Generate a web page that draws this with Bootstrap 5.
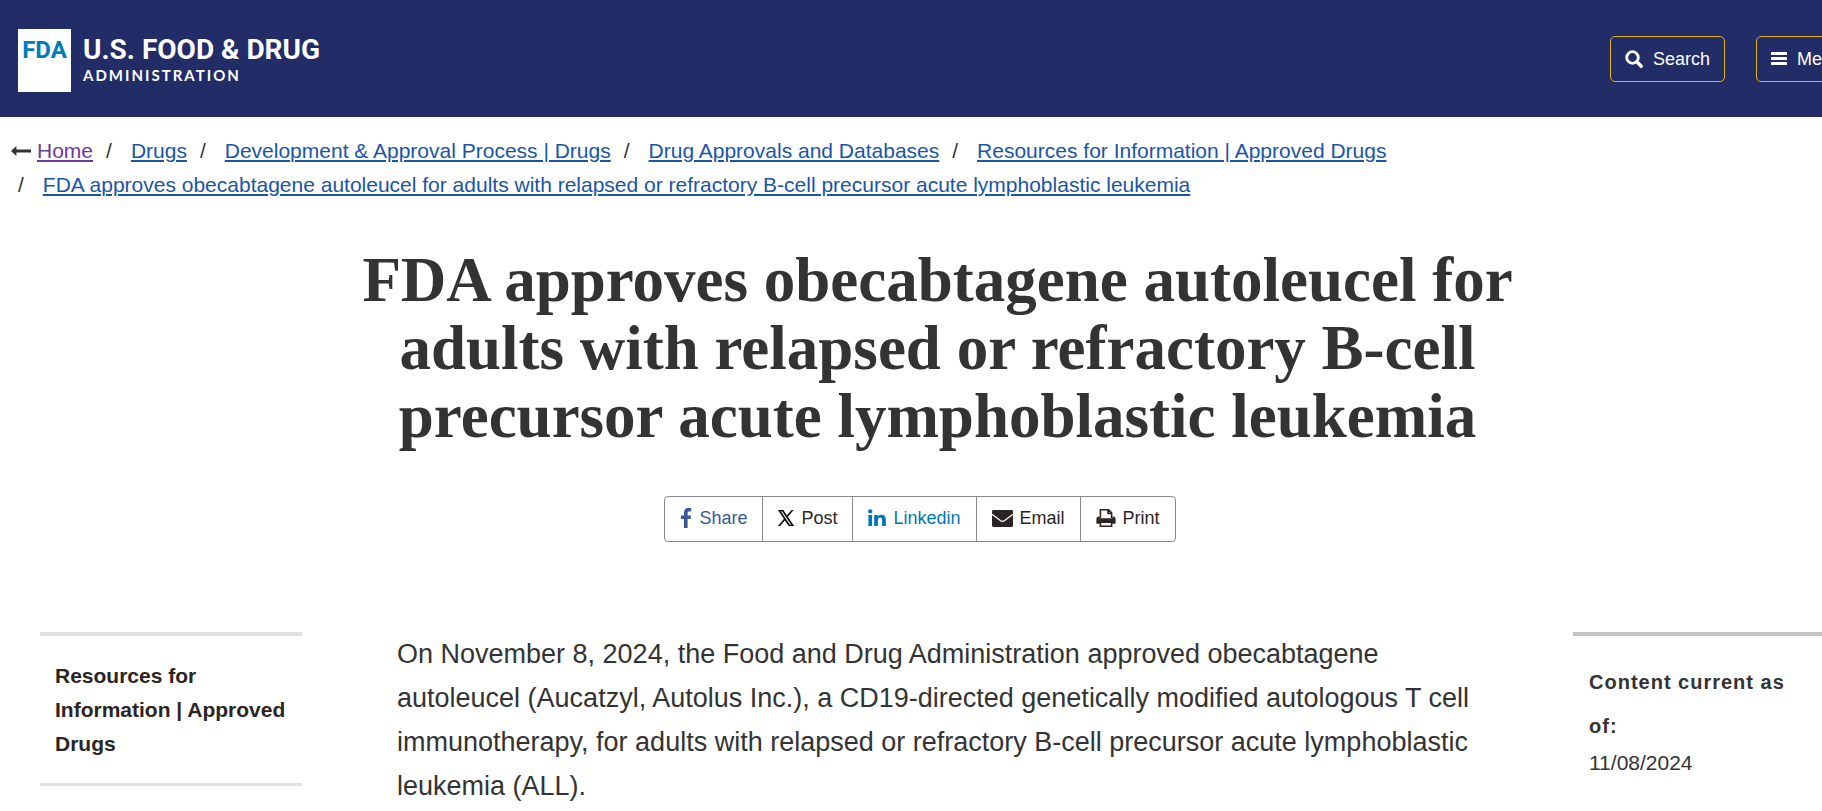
<!DOCTYPE html>
<html lang="en">
<head>
<meta charset="utf-8">
<meta name="viewport" content="width=device-width, initial-scale=1">
<title>FDA approves obecabtagene autoleucel</title>
<link rel="stylesheet" href="https://cdn.jsdelivr.net/npm/bootstrap@5.3.0/dist/css/bootstrap.min.css">
<style>
  body { font-family: "Liberation Sans", Arial, sans-serif; font-size: 21px; line-height: 34px; color: #333; background: #fff; overflow: hidden; }
  /* the page runs wider than the window, so its right edge is clipped */
  .page-canvas { width: calc(100% + 53px); }
  .site-header { background: #222c67; padding: 29px 18px 25px; }
  .logo-box { width: 53px; height: 63px; background: #fff; color: #007cba; font: 700 24px/24px Roboto, sans-serif; padding-top: 9px; }
  .logo-name { font: 700 28px/28px Roboto, sans-serif; }
  .logo-sub { font: 700 15px/22px Lato, sans-serif; letter-spacing: 2px; }
  .header-btn { --bs-btn-color: #fff; --bs-btn-border-color: #e5b611; --bs-btn-hover-color: #fff; --bs-btn-hover-border-color: #fff; --bs-btn-border-radius: 5px; height: 46px; padding: 0 14px; font-size: 18px; gap: 10px; }
  .header-actions { gap: 31px; padding-bottom: 3px; }
  .crumbs { padding: 17px 5px 0; }
  .crumbs a { color: #1a55a8; text-decoration-thickness: 2px; text-underline-offset: 2px; }
  .crumbs a.seen { color: #6f3a9b; }
  .crumbs li + li::before { content: "/"; padding: 0 19px 0 13px; }
  .crumbs svg { margin: 0 6px; }
  .page-title { font: 700 63px/68px "Liberation Serif", serif; color: #333; max-width: 1200px; margin-top: 44px; }
  .share-bar { padding-right: 35px; margin-top: 46px; }
  .share-bar .btn { --bs-btn-border-color: #8a8a8a; --bs-btn-hover-border-color: #8a8a8a; --bs-btn-color: #2b2523; --bs-btn-border-radius: 4px; height: 46px; padding: 0 15px 2px; font-size: 18px; gap: 7px; }
  .share-bar .fb { --bs-btn-color: #3b5998; }
  .share-bar .li { --bs-btn-color: #0077b5; }
  .content-row { padding: 0 40px; margin-top: 90px; gap: 95px; }
  .side-col { flex: 0 0 262px; }
  .side-nav { border-top: 4px solid #e1e1e3; border-bottom: 3px solid #e1e1e3; padding: 23px 15px 22px; }
  .side-nav a { color: #2b2523; }
  .article-text { font-size: 27px; line-height: 44px; }
  .date-card { border-top: 4px solid #c2c4c6; padding: 24px 16px; line-height: 30px; }
  .date-card h2 { font: 700 20px/44px "Liberation Sans", Arial, sans-serif; letter-spacing: 1px; }
</style>
</head>
<body>
<div class="page-canvas">
  <header class="site-header d-flex align-items-center justify-content-between text-white">
    <a href="#" class="d-flex align-items-center text-white text-decoration-none">
      <span class="logo-box text-center">FDA</span>
      <span class="d-flex flex-column ps-2 ms-1">
        <span class="logo-name">U.S. FOOD &amp; DRUG</span>
        <span class="logo-sub">ADMINISTRATION</span>
      </span>
    </a>
    <div class="header-actions d-flex">
      <button type="button" class="header-btn btn d-inline-flex align-items-center">
        <svg width="18" height="18" viewBox="0 0 18 18" fill="none" stroke="currentColor" aria-hidden="true"><circle cx="7.5" cy="7.5" r="5.8" stroke-width="2.8"/><path d="M11.8 11.8l4.4 4.4" stroke-width="3.4" stroke-linecap="round"/></svg>
        Search
      </button>
      <button type="button" class="header-btn btn d-inline-flex align-items-center">
        <svg width="16" height="14" viewBox="0 0 16 14" fill="currentColor" aria-hidden="true"><rect width="16" height="3" rx=".6"/><rect y="5" width="16" height="3" rx=".6"/><rect y="10" width="16" height="3" rx=".6"/></svg>
        Menu
      </button>
    </div>
  </header>

  <nav aria-label="Breadcrumb">
    <ol class="crumbs list-unstyled d-flex flex-wrap mb-0">
      <li class="d-flex align-items-center"><svg width="20" height="10" viewBox="0 0 20 10" fill="#333" aria-hidden="true"><path d="M0 5L5.400 0v3.500H20v3H5.400V10z"/></svg><a class="seen" href="#">Home</a></li>
      <li><a href="#">Drugs</a></li>
      <li><a href="#">Development &amp; Approval Process | Drugs</a></li>
      <li><a href="#">Drug Approvals and Databases</a></li>
      <li><a href="#">Resources for Information | Approved Drugs</a></li>
      <li><a href="#">FDA approves obecabtagene autoleucel for adults with relapsed or refractory B-cell precursor acute lymphoblastic leukemia</a></li>
    </ol>
  </nav>

  <main>
    <h1 class="page-title text-center mx-auto mb-0">FDA approves obecabtagene autoleucel for adults with relapsed or refractory B-cell precursor acute lymphoblastic leukemia</h1>

    <div class="share-bar d-flex justify-content-center">
      <div class="btn-group" role="group" aria-label="Share this page">
        <a href="#" class="fb btn d-inline-flex align-items-center"><svg width="12" height="20" viewBox="0 0 12 20" fill="currentColor" aria-hidden="true"><path d="M11.200.2v3.200H9.300c-1.400 0-1.700.7-1.700 1.700v2.300h3.500l-.5 3.500h-3v9H3.900v-9h-3V7.400h3V4.800C3.900 1.800 5.700.1 8.500.1c1.300 0 2.400.1 2.700.1z"/></svg>Share</a>
        <a href="#" class="btn d-inline-flex align-items-center"><svg width="16" height="16" viewBox="0 0 16 16" fill="#000" stroke="#000" stroke-width=".7" aria-hidden="true"><path d="M9.500 6.800L15.200 0h-1.400L8.900 5.900 4.900 0H.3l6 8.900L.3 16h1.400L6.900 9.900l4.200 6.100h4.600zM7.600 8.900l-.6-.9L2.200 1.100h2.100l3.800 5.600.6.900 5.100 7.400h-2.100z"/></svg>Post</a>
        <a href="#" class="li btn d-inline-flex align-items-center"><svg width="18" height="18" viewBox="0 0 18 18" fill="currentColor" aria-hidden="true"><circle cx="2.200" cy="2.400" r="2.100"/><path d="M.4 6h3.700v11H.4zM6.200 6h3.600v1.600c.6-.9 1.600-1.900 3.500-1.900 2.600 0 4.500 1.700 4.500 5V17h-3.700v-5.900c0-1.500-.6-2.500-1.900-2.500-1.400 0-2.300 1-2.300 2.500V17H6.200z"/></svg>Linkedin</a>
        <a href="#" class="btn d-inline-flex align-items-center"><svg width="21" height="17" viewBox="0 0 21 17" fill="currentColor" aria-hidden="true"><rect width="21" height="17" rx="1.400"/><path d="M0 4.200l8.300 6.300c1.400 1 3 1 4.400 0L21 4.200" fill="none" stroke="#fff" stroke-width="1.200"/></svg>Email</a>
        <a href="#" class="btn d-inline-flex align-items-center"><svg width="20" height="18" viewBox="0 0 20 18" fill="none" stroke="currentColor" stroke-width="1.600" aria-hidden="true"><path d="M4.400 9V.8h8.200l3 3V9M12 .8v3.600h3.600"/><path fill="currentColor" stroke="none" d="M2.800 7.500h.8V9.300h12.800V7.500h.8c1.400 0 2.400 1 2.400 2.400v4.200c0 .4-.2.6-.6.600H1c-.4 0-.6-.2-.6-.6V9.900c0-1.400 1-2.400 2.400-2.400z"/><path fill="#fff" d="M4.400 13.200h11.200v4H4.400z"/></svg>Print</a>
      </div>
    </div>

    <div class="content-row d-flex align-items-start">
      <aside class="side-col">
        <nav class="side-nav" aria-label="Section"><a href="#" class="fw-bold text-decoration-none d-block">Resources for Information | Approved Drugs</a></nav>
      </aside>
      <article class="article-text flex-fill">
        <p class="mb-0">On November 8, 2024, the Food and Drug Administration approved obecabtagene autoleucel (Aucatzyl, Autolus Inc.), a CD19-directed genetically modified autologous T cell immunotherapy, for adults with relapsed or refractory B-cell precursor acute lymphoblastic leukemia (ALL).</p>
      </article>
      <aside class="side-col date-card">
        <h2 class="mb-0">Content current as of:</h2>
        <time class="d-block" datetime="2024-11-08">11/08/2024</time>
      </aside>
    </div>
  </main>
</div>
<script src="https://cdn.jsdelivr.net/npm/bootstrap@5.3.0/dist/js/bootstrap.bundle.min.js"></script>
</body>
</html>
